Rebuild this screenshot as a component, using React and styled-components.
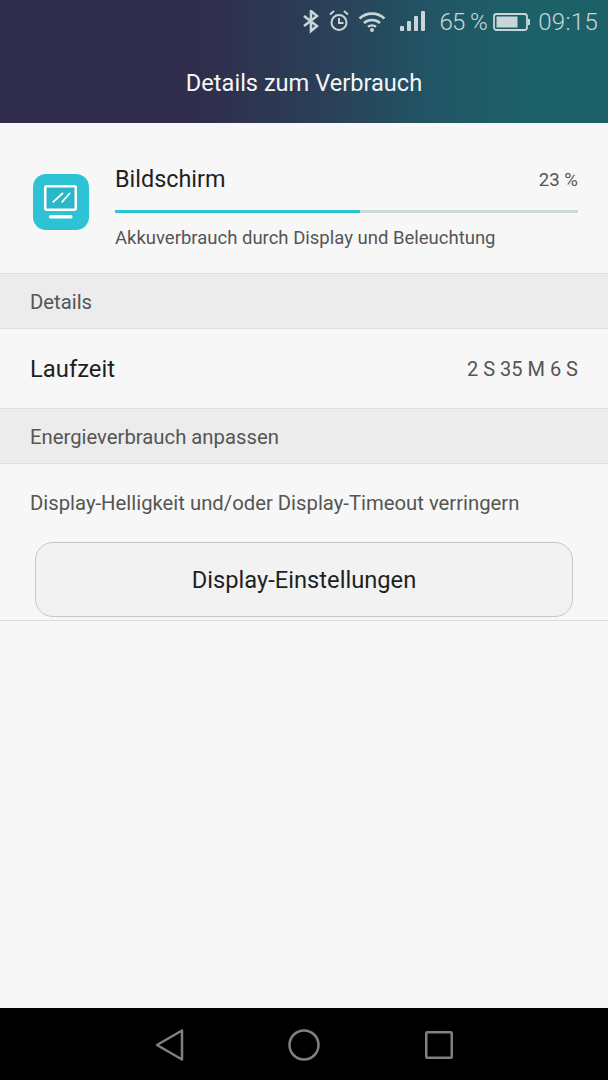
import React from "react";
import styled, { createGlobalStyle } from "styled-components";

const Global = createGlobalStyle`
  html, body { margin: 0; padding: 0; background: #f7f7f7; }
  * { box-sizing: border-box; }
`;

const Page = styled.div`
  width: 608px;
  height: 1080px;
  display: flex;
  flex-direction: column;
  background: #f7f7f7;
  font-family: Roboto, "Liberation Sans", sans-serif;
  overflow: hidden;
`;

const Header = styled.header`
  height: 123px;
  flex: none;
  background: linear-gradient(90deg, #302c4c 0%, #302d4c 32%, #2a4058 54%, #215666 72%, #1c6168 88%, #1c6168 100%);
`;

const StatusBar = styled.div`
  height: 44px;
  display: flex;
  align-items: center;
  justify-content: flex-end;
  padding-right: 10px;
  color: #c8d6d8;
`;

const StatusIcon = styled.svg`
  display: block;
  flex: none;
  margin-left: ${(p) => p.$gap}px;
`;

const StatusText = styled.span`
  font-size: 24px;
  font-weight: 300;
  line-height: 44px;
  margin-left: ${(p) => p.$gap}px;
  letter-spacing: ${(p) => p.$spacing || 0}px;
  white-space: nowrap;
`;

const Title = styled.h1`
  margin: 0;
  height: 79px;
  display: flex;
  justify-content: center;
  padding-top: 23px;
  font-size: 23.6px;
  line-height: 33px;
  font-weight: 400;
  color: #f4f6f7;
`;

const AppRow = styled.section`
  height: 150px;
  flex: none;
  display: flex;
  align-items: flex-start;
  padding: 51px 30px 0 33px;
`;

const AppIcon = styled.svg`
  display: block;
  flex: none;
  margin-right: 26px;
`;

const AppInfo = styled.div`
  flex: 1;
  min-width: 0;
  margin-top: -12px;
`;

const AppTop = styled.div`
  display: flex;
  justify-content: space-between;
  align-items: center;
  height: 33px;
`;

const AppName = styled.span`
  font-size: 23.4px;
  color: #1f1f1f;
`;

const Percent = styled.span`
  font-size: 18.6px;
  margin-top: 3px;
  color: #555;
`;

const Track = styled.div`
  height: 3px;
  margin-top: 15px;
  background: #ced9dc;
`;

const Fill = styled.div`
  height: 100%;
  background: #2ec3d4;
`;

const AppDesc = styled.div`
  margin-top: 13px;
  font-size: 18.5px;
  line-height: 24px;
  color: #555;
`;

const SectionHead = styled.div`
  height: 56px;
  flex: none;
  display: flex;
  align-items: center;
  padding: 2px 0 0 30px;
  background: #ececec;
  border-top: 1px solid #dedede;
  border-bottom: 1px solid #dedede;
  font-size: 20.3px;
  color: #555;
`;

const InfoRow = styled.div`
  height: 79px;
  flex: none;
  display: flex;
  justify-content: space-between;
  align-items: center;
  padding: 0 30px;
`;

const InfoLabel = styled.span`
  font-size: 23.8px;
  color: #1f1f1f;
`;

const InfoValue = styled.span`
  font-size: 20px;
  color: #555;
`;

const Hint = styled.p`
  margin: 0;
  padding: 27px 30px 0;
  font-size: 20.3px;
  line-height: 24px;
  color: #555;
  white-space: nowrap;
`;

const ActionArea = styled.div`
  padding: 27px 35px 3px;
  border-bottom: 1px solid #dcdcdc;
`;

const ActionButton = styled.button`
  display: block;
  width: 538px;
  height: 75px;
  padding: 0;
  border: 1px solid #c6c6c6;
  border-radius: 18px;
  background: #f2f2f2;
  font-family: inherit;
  font-size: 23.7px;
  color: #1f1f1f;
`;

const Spacer = styled.div`
  flex: 1;
`;

const NavBar = styled.nav`
  height: 72px;
  flex: none;
  background: #000;
  display: flex;
  align-items: center;
  justify-content: center;
  gap: 104px;
  padding: 2px 1px 0 0;
`;

export default function App() {
  return (
    <Page>
      <Global />
      <Header>
        <StatusBar>
          <StatusIcon $gap={0} width="16" height="24" viewBox="0 0 16 24" fill="none" stroke="currentColor" strokeWidth="2.600">
            <path d="M1 6l13 10-6 5V1l6 5L1 16" />
          </StatusIcon>
          <StatusIcon $gap={10} width="20" height="24" viewBox="0 0 20 24" fill="none" stroke="currentColor" strokeWidth="2">
            <circle cx="10" cy="12.500" r="7.500" />
            <path d="M10 8v5h4.500" />
            <path d="M1 4.500L5 1M19 4.500L15 1" />
          </StatusIcon>
          <StatusIcon $gap={9} width="28" height="24" viewBox="0 0 28 24" fill="none" stroke="currentColor" strokeWidth="2.600">
            <path d="M1.500 8.500c7-6.500 18-6.500 25 0" />
            <path d="M6 13c4.500-4 11.500-4 16 0" />
            <path d="M10 16.800c2.300-1.800 5.700-1.800 8 0" />
            <circle cx="14" cy="20" r="2" fill="currentColor" stroke="none" />
          </StatusIcon>
          <StatusIcon $gap={14} width="25" height="24" viewBox="0 0 25 24" fill="currentColor">
            <rect x="0" y="16" width="4" height="5" rx="1" />
            <rect x="7" y="11" width="4" height="10" rx="1" />
            <rect x="14" y="6" width="4" height="15" rx="1" />
            <rect x="21" y="1" width="4" height="20" rx="1" />
          </StatusIcon>
          <StatusText $gap={14} $spacing={-0.6}>65 %</StatusText>
          <StatusIcon $gap={6} width="37" height="24" viewBox="0 0 37 24">
            <rect x="1" y="4" width="33" height="16" rx="2.500" fill="none" stroke="currentColor" strokeWidth="1.800" />
            <rect x="3.500" y="6.500" width="21" height="11" fill="currentColor" />
            <rect x="35" y="9" width="2" height="6" fill="currentColor" />
          </StatusIcon>
          <StatusText $gap={8} $spacing={0.3}>09:15</StatusText>
        </StatusBar>
        <Title>Details zum Verbrauch</Title>
      </Header>

      <AppRow>
        <AppIcon width="56" height="56" viewBox="0 0 56 56">
          <rect width="56" height="56" rx="13" fill="#2ec3d4" />
          <rect x="12.250" y="12.250" width="30.500" height="23.500" rx="1.500" fill="#2ab7c7" stroke="#fff" strokeWidth="2.500" />
          <rect x="16" y="41" width="23.500" height="3.500" rx="1.500" fill="#fff" />
          <path d="M19.700 28.300L30 19M28.700 28.300L37 19" stroke="#fff" strokeWidth="1.800" />
        </AppIcon>
        <AppInfo>
          <AppTop>
            <AppName>Bildschirm</AppName>
            <Percent>23 %</Percent>
          </AppTop>
          <Track>
            <Fill style={{ width: "53%" }} />
          </Track>
          <AppDesc>Akkuverbrauch durch Display und Beleuchtung</AppDesc>
        </AppInfo>
      </AppRow>

      <SectionHead>Details</SectionHead>
      <InfoRow>
        <InfoLabel>Laufzeit</InfoLabel>
        <InfoValue>2 S 35 M 6 S</InfoValue>
      </InfoRow>
      <SectionHead>Energieverbrauch anpassen</SectionHead>
      <Hint>Display-Helligkeit und/oder Display-Timeout verringern</Hint>
      <ActionArea>
        <ActionButton>Display-Einstellungen</ActionButton>
      </ActionArea>
      <Spacer />

      <NavBar>
        <svg width="30" height="34" viewBox="0 0 30 34" fill="none" stroke="#808080" strokeWidth="2.500" strokeLinejoin="round">
          <path d="M3 17L28 2.500v29z" />
        </svg>
        <svg width="32" height="32" viewBox="0 0 32 32" fill="none" stroke="#808080" strokeWidth="2.500">
          <circle cx="16" cy="16" r="14.500" />
        </svg>
        <svg width="29" height="28" viewBox="0 0 29 28" fill="none" stroke="#808080" strokeWidth="2.500" strokeLinejoin="round">
          <rect x="2.250" y="1.250" width="25.500" height="25.500" rx="1" />
        </svg>
      </NavBar>
    </Page>
  );
}
